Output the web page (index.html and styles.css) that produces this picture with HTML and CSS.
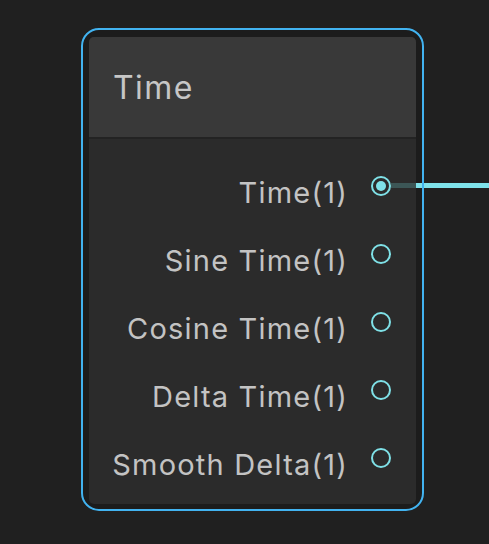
FILE: index.html
```html
<!DOCTYPE html>
<html lang="en">
<head>
  <meta charset="UTF-8">
  <link rel="stylesheet" href="styles.css">
</head>
<body>
  <div class="canvas">
    <div class="selection">
      <div class="node">
        <div class="node-title">Time</div>
        <div class="node-ports">
          <div class="port">
            <span class="port-label">Time(1)</span>
            <span class="port-dot connected"></span>
            <span class="port-stub"></span>
            <span class="wire"></span>
          </div>
          <div class="port">
            <span class="port-label">Sine Time(1)</span>
            <span class="port-dot"></span>
          </div>
          <div class="port">
            <span class="port-label">Cosine Time(1)</span>
            <span class="port-dot"></span>
          </div>
          <div class="port">
            <span class="port-label">Delta Time(1)</span>
            <span class="port-dot"></span>
          </div>
          <div class="port">
            <span class="port-label">Smooth Delta(1)</span>
            <span class="port-dot"></span>
          </div>
        </div>
      </div>
    </div>
  </div>
</body>
</html>
```

FILE: styles.css
```css
html, body { height: 100%; margin: 0; padding: 0; }
body {
  background: #202020; color: #c4c4c4;
  font-family: Inter, "Noto Sans", sans-serif;
  overflow: hidden;
}
.canvas { padding: 28px 0 0 81px; }

.selection {
  position: relative; width: 343px; height: 483px;
  box-sizing: border-box; padding: 9px 8px 7px 8px;
  background: #1c1c1c; border-radius: 18px;
}
.selection::after {
  content: ''; position: absolute; top: 0; right: 0; bottom: 0; left: 0;
  border: 2px solid #42b3f0; border-radius: 18px;
  pointer-events: none; z-index: 2;
}

.node {
  height: 100%; display: flex; flex-direction: column;
  background: #2b2b2b; border-radius: 5px;
}
.node-title {
  height: 100px; display: flex; align-items: center;
  padding-left: 24px; font-size: 32px; letter-spacing: 1.4px; color: #c6c6c6;
  background: #393939; border-radius: 5px 5px 0 0;
  border-bottom: 2px solid #232323;
}
.node-ports { padding: 19px 25px 0 0; }

.port {
  position: relative; height: 68px;
  display: flex; justify-content: flex-end; align-items: center;
}
.port-label { font-size: 29px; letter-spacing: 1.2px; color: #c3c3c3; }
.port-dot {
  width: 16px; height: 16px; margin: 0 0 12px 23px;
  border: 2px solid #7fe1e7; border-radius: 50%;
  display: flex; align-items: center; justify-content: center;
}
.port-dot.connected::before {
  content: ''; width: 10px; height: 10px;
  border-radius: 50%; background: #7fe1e7;
}
.port-stub {
  position: absolute; left: 302px; width: 25px; top: 25px; height: 5px;
  background: #3c5656;
}
.wire {
  position: absolute; left: 327px; width: 90px; top: 25px; height: 5px;
  background: #7fe2ea; z-index: 1;
}
```
